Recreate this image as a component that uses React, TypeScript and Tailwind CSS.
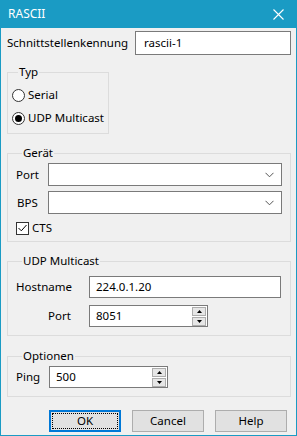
import React from "react";

// ── Kleine Bausteine ─────────────────────────────────────────────────────────
function Chevron() {
  return (
    <svg width="9" height="6" viewBox="0 0 9 6" className="text-[#555]">
      <path d="M0.5 0.8 L4.5 4.8 L8.5 0.8" fill="none" stroke="currentColor" strokeWidth="1" />
    </svg>
  );
}

function ComboBox() {
  return (
    <div className="flex-1 h-[23px] border border-[#7a7a7a] bg-white flex items-center justify-end pr-[7px]">
      <Chevron />
    </div>
  );
}

function Spinner() {
  return (
    <div className="flex flex-col gap-px py-[1px] pr-[1px]">
      <div className="w-[14px] h-[9px] bg-[#e6e6e6] border border-[#adadad] flex items-center justify-center">
        <svg width="5" height="3" viewBox="0 0 5 3"><path d="M0 3 L2.5 0 L5 3 Z" fill="#000" /></svg>
      </div>
      <div className="w-[14px] h-[9px] bg-[#e6e6e6] border border-[#adadad] flex items-center justify-center">
        <svg width="5" height="3" viewBox="0 0 5 3"><path d="M0 0 L2.5 3 L5 0 Z" fill="#000" /></svg>
      </div>
    </div>
  );
}

function SpinBox({ value, width }: { value: string; width: string }) {
  return (
    <div className={`${width} h-[22px] border border-[#7a7a7a] bg-white flex items-center justify-between`}>
      <span className="pl-[6px]">{value}</span>
      <Spinner />
    </div>
  );
}

function Radio({ checked, label }: { checked?: boolean; label: string }) {
  return (
    <div className="flex items-center gap-[3px] h-[16px]">
      <div className="w-[13px] h-[13px] rounded-full border border-[#333] bg-white flex items-center justify-center">
        {checked && <div className="w-[7px] h-[7px] rounded-full bg-[#000]" />}
      </div>
      <span>{label}</span>
    </div>
  );
}

function Group({ title, className, children }: { title: string; className?: string; children: React.ReactNode }) {
  return (
    <fieldset className={`border border-[#dcdcdc] ${className ?? ""}`}>
      <legend className="ml-[6px] px-[1px] h-[16px] leading-[16px]">{title}</legend>
      {children}
    </fieldset>
  );
}

function Button({ label, focused }: { label: string; focused?: boolean }) {
  return (
    <div
      className={`w-[72px] h-[22px] flex items-center justify-center bg-[#e1e1e1] ${
        focused ? "border-2 border-[#0078d7] p-[1px]" : "border border-[#adadad]"
      }`}
    >
      {focused ? (
        <div className="w-full h-full border border-dotted border-[#000] flex items-center justify-center">{label}</div>
      ) : (
        label
      )}
    </div>
  );
}

// ── Dialog ───────────────────────────────────────────────────────────────────
export default function App() {
  return (
    <div className="w-[297px] h-[436px] bg-[#1a9bc4] flex flex-col font-['Noto_Sans','Open_Sans',sans-serif] text-[11.5px] text-[#000] leading-[16px]">
      <div className="h-[28px] flex items-center justify-between pl-[8px] pr-[13px] text-white text-[12px]">
        <span>RASCII</span>
        <svg width="11" height="11" viewBox="0 0 11 11">
          <path d="M0.5 0.5 L10.5 10.5 M10.5 0.5 L0.5 10.5" stroke="#fff" strokeWidth="1.1" />
        </svg>
      </div>

      <div className="flex-1 mx-px mb-px bg-[#f0f0f0] flex flex-col pl-[6px] pr-[5px]">
        <div className="flex items-center mt-[3px] h-[24px]">
          <span className="w-[127px]">Schnittstellenkennung</span>
          <div className="flex-1 h-[24px] border border-[#7a7a7a] bg-white flex items-center pl-[8px] ml-[1px]">rascii-1</div>
        </div>

        <Group title="Typ" className="w-[102px] mt-[9px] pl-[4px] pt-[7px] pb-[7px] flex flex-col gap-[7px]">
          <Radio label="Serial" />
          <Radio checked label="UDP Multicast" />
        </Group>

        <Group title="Gerät" className="mt-[11px] pl-[8px] pr-[8px] pt-[2px] pb-[5px]">
          <div className="flex items-center">
            <span className="w-[32px]">Port</span>
            <ComboBox />
          </div>
          <div className="flex items-center mt-[5px]">
            <span className="w-[32px] pl-[1px]">BPS</span>
            <ComboBox />
          </div>
          <div className="flex items-center gap-[3px] mt-[6px] h-[16px]">
            <div className="w-[13px] h-[13px] border border-[#333] bg-white flex items-center justify-center">
              <svg width="9" height="8" viewBox="0 0 9 8">
                <path d="M0.5 4 L3.3 6.8 L8.5 1" fill="none" stroke="#000" strokeWidth="1" />
              </svg>
            </div>
            <span>CTS</span>
          </div>
        </Group>

        <Group title="UDP Multicast" className="mt-[11px] pl-[8px] pr-[9px] pt-[7px] pb-[8px]">
          <div className="flex items-center">
            <span className="w-[73px] text-left">Hostname</span>
            <div className="flex-1 h-[22px] border border-[#7a7a7a] bg-white flex items-center pl-[6px]">224.0.1.20</div>
          </div>
          <div className="flex items-center mt-[7px]">
            <span className="w-[73px] pl-[32px]">Port</span>
            <SpinBox value="8051" width="w-[119px]" />
          </div>
        </Group>

        <Group title="Optionen" className="mt-[12px] pl-[8px] pt-[2px] pb-[8px]">
          <div className="flex items-center">
            <span className="w-[33px]">Ping</span>
            <SpinBox value="500" width="w-[119px]" />
          </div>
        </Group>

        <div className="flex justify-end gap-[11px] mt-[13px] pr-[4px]">
          <Button label="OK" focused />
          <Button label="Cancel" />
          <Button label="Help" />
        </div>
      </div>
    </div>
  );
}
